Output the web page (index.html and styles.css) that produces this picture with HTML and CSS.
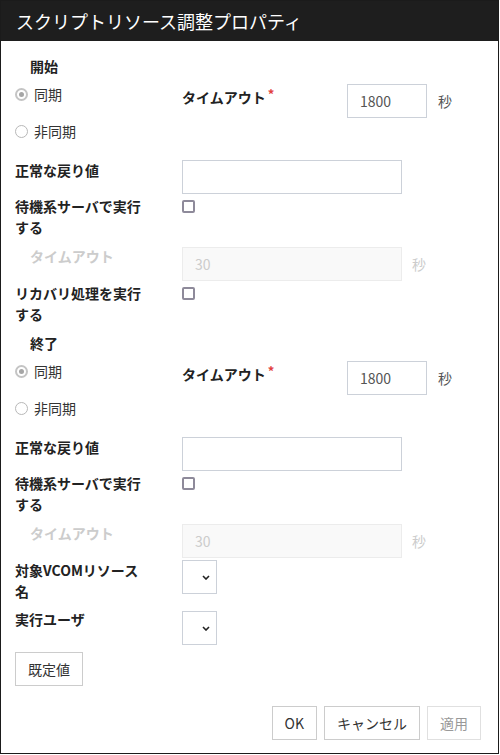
FILE: index.html
```html
<!DOCTYPE html>
<html lang="ja">
<head>
<meta charset="utf-8">
<title>スクリプトリソース調整プロパティ</title>
<link rel="stylesheet" href="styles.css">
</head>
<body>
<div class="dialog">
  <div class="titlebar">スクリプトリソース調整プロパティ</div>
  <div class="content">
    <div class="section-title">開始</div>
    <div class="row row-sync">
      <label class="radio"><span class="rb checked"></span>同期</label>
      <span class="tlabel">タイムアウト<span class="req">*</span></span>
      <span class="field"><input class="input num" type="text" value="1800"><span class="unit">秒</span></span>
    </div>
    <div class="row row-async">
      <label class="radio"><span class="rb"></span>非同期</label>
    </div>
    <div class="row row-input">
      <span class="label">正常な戻り値</span>
      <input class="input wide" type="text" value="">
    </div>
    <div class="row row-check">
      <span class="label">待機系サーバで実行<br>する</span>
      <span class="checkbox"></span>
    </div>
    <div class="row row-disabled">
      <span class="label sub disabled">タイムアウト</span>
      <span class="field"><input class="input wide" type="text" value="30" disabled><span class="unit disabled">秒</span></span>
    </div>
    <div class="row row-check2">
      <span class="label">リカバリ処理を実行<br>する</span>
      <span class="checkbox"></span>
    </div>

    <div class="section-title second">終了</div>
    <div class="row row-sync">
      <label class="radio"><span class="rb checked"></span>同期</label>
      <span class="tlabel">タイムアウト<span class="req">*</span></span>
      <span class="field"><input class="input num" type="text" value="1800"><span class="unit">秒</span></span>
    </div>
    <div class="row row-async">
      <label class="radio"><span class="rb"></span>非同期</label>
    </div>
    <div class="row row-input">
      <span class="label">正常な戻り値</span>
      <input class="input wide" type="text" value="">
    </div>
    <div class="row row-check">
      <span class="label">待機系サーバで実行<br>する</span>
      <span class="checkbox"></span>
    </div>
    <div class="row row-disabled">
      <span class="label sub disabled">タイムアウト</span>
      <span class="field"><input class="input wide" type="text" value="30" disabled><span class="unit disabled">秒</span></span>
    </div>
    <div class="row row-select">
      <span class="label">対象VCOMリソース<br>名</span>
      <span class="select"><svg width="8" height="5" viewBox="0 0 8 5"><path d="M1 1 L4 4 L7 1" fill="none" stroke="#222" stroke-width="1.6"/></svg></span>
    </div>
    <div class="row row-user">
      <span class="label">実行ユーザ</span>
      <span class="select"><svg width="8" height="5" viewBox="0 0 8 5"><path d="M1 1 L4 4 L7 1" fill="none" stroke="#222" stroke-width="1.6"/></svg></span>
    </div>
    <button class="btn default-btn" type="button">既定値</button>
  </div>
  <div class="footer">
    <button class="btn" type="button">OK</button>
    <button class="btn" type="button">キャンセル</button>
    <button class="btn btn-disabled" type="button">適用</button>
  </div>
</div>
</body>
</html>
```

FILE: styles.css
```css
* { box-sizing: border-box; }
html, body {
  margin: 0;
  padding: 0;
  background: #fff;
}
body {
  font-family: "Noto Sans CJK JP", "Noto Sans", sans-serif;
  font-size: 14px;
  line-height: 21px;
  color: #333;
}
.dialog {
  width: 499px;
  height: 754px;
  border: 1px solid #1b1b1b;
  display: flex;
  flex-direction: column;
  background: #fff;
}
.titlebar {
  height: 40px;
  flex: none;
  background: #1e1e1e;
  color: #fff;
  font-size: 18px;
  line-height: 40px;
  padding-left: 15px;
}
.content {
  flex: 1;
  padding: 15px 0 0 14px;
}
.section-title {
  font-weight: bold;
  color: #222;
  padding-left: 15px;
  height: 21px;
}
.section-title.second { margin-top: 8px; }
.row {
  display: flex;
  align-items: flex-start;
}
.row-sync { margin-top: 7px; height: 34px; }
.row-async { margin-top: 3px; height: 21px; }
.row-input { margin-top: 18px; }
.row-check { margin-top: 2px; height: 42px; }
.row-disabled { margin-top: 9px; }
.row-check2 { margin-top: 2px; height: 42px; }
.row-select { margin-top: 2px; height: 42px; }
.row-user { margin-top: 9px; }
.row-user .label { margin-top: -2px; }
.label {
  width: 167px;
  flex: none;
  font-weight: bold;
  color: #222;
}
.label.sub { padding-left: 15px; margin-top: -1px; }
.label.disabled { color: #ccc; }
.radio {
  width: 167px;
  flex: none;
  display: flex;
  align-items: center;
  height: 21px;
  gap: 6px;
  color: #333;
}
.rb {
  width: 13px;
  height: 13px;
  border: 1px solid #b8b8b8;
  border-radius: 50%;
  display: flex;
  align-items: center;
  justify-content: center;
  background: #fff;
}
.rb.checked::after {
  content: "";
  width: 5px;
  height: 5px;
  border-radius: 50%;
  background: #a6a6a6;
}
.rb.checked { border: 2px solid #c4c4c4; }
.tlabel {
  width: 165px;
  flex: none;
  font-weight: bold;
  color: #222;
  margin-top: -1px;
}
.req {
  color: #e2413f;
  font-size: 13px;
  vertical-align: 4px;
  margin-left: 2px;
}
.field {
  display: flex;
  align-items: center;
}
.input {
  height: 34px;
  border: 1px solid #ccd1d9;
  background: #fff;
  font-family: inherit;
  font-size: 14px;
  color: #555;
  padding: 0 12px;
  margin: 0;
  outline: none;
}
.input.num { width: 80px; }
.input.wide { width: 220px; }
.input:disabled {
  background: #f9f9f9;
  border-color: #ececec;
  color: #ccc;
}
.unit {
  margin-left: 11px;
  color: #555;
}
.unit.disabled { color: #ccc; margin-left: 10px; }
.checkbox {
  width: 13px;
  height: 13px;
  margin-top: 4px;
  border: 2px solid #8e8a9a;
  border-radius: 2px;
  background: #fff;
}
.select {
  width: 35px;
  height: 34px;
  border: 1px solid #ccd1d9;
  background: #fff;
  display: flex;
  align-items: center;
  justify-content: flex-end;
  padding-right: 6px;
}
.select svg { display: block; }
.btn {
  height: 34px;
  border: 1px solid #ccc;
  background: #fff;
  font-family: inherit;
  font-size: 14px;
  color: #333;
  padding: 0 12px;
  margin: 0;
  line-height: 32px;
}
.default-btn {
  display: block;
  margin-top: 7px;
}
.btn-disabled {
  color: #999;
  border-color: #e0e0e0;
}
.footer {
  flex: none;
  display: flex;
  justify-content: flex-end;
  gap: 7px;
  padding: 0 17px 13px 0;
}
```
